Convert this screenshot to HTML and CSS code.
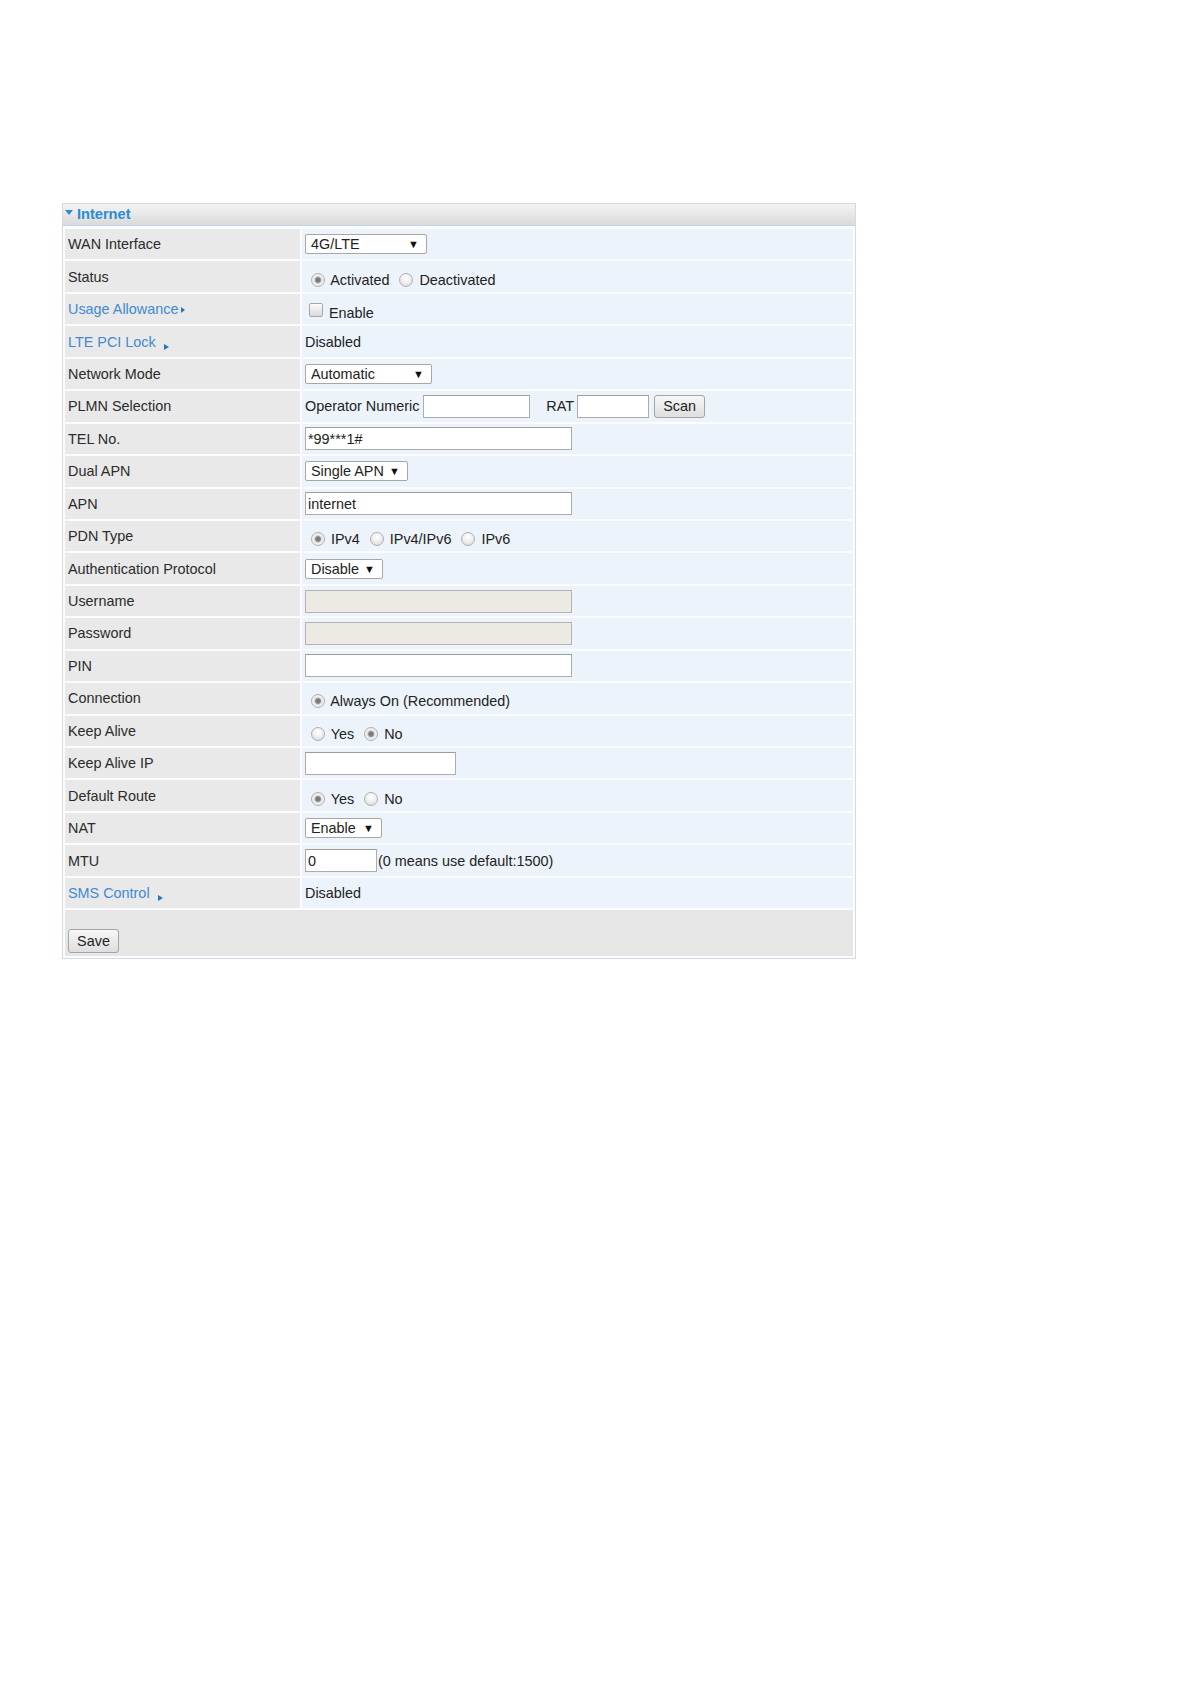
FILE: index.html
```html
<!DOCTYPE html>
<html>
<head>
<meta charset="utf-8">
<title>Internet</title>
<link rel="stylesheet" href="styles.css">
</head>
<body>
<div class="panel">
  <div class="panel-head"><span class="caret"></span>Internet</div>
  <table class="form">
    <tr><td class="lbl">WAN Interface</td><td class="val"><span class="sel"><select class="w122"><option>4G/LTE</option></select></span></td></tr>
    <tr><td class="lbl">Status</td><td class="val opt"><label><input type="radio" name="st" checked> Activated</label> <label><input type="radio" name="st"> Deactivated</label></td></tr>
    <tr><td class="lbl"><a class="link" href="#">Usage Allowance</a><span class="tri tri-mid"></span></td><td class="val opt"><label><input type="checkbox"> Enable</label></td></tr>
    <tr><td class="lbl"><a class="link" href="#">LTE PCI Lock</a> <span class="tri tri-low"></span></td><td class="val">Disabled</td></tr>
    <tr><td class="lbl">Network Mode</td><td class="val"><span class="sel"><select class="w127"><option>Automatic</option></select></span></td></tr>
    <tr><td class="lbl">PLMN Selection</td><td class="val"><span class="line"><span>Operator Numeric</span><input type="text" class="w107 gap4"><span class="gap16">RAT</span><input type="text" class="w72 gap3"><button class="btn btn-scan gap5">Scan</button></span></td></tr>
    <tr><td class="lbl">TEL No.</td><td class="val"><input type="text" class="w267" value="*99***1#"></td></tr>
    <tr><td class="lbl">Dual APN</td><td class="val"><span class="sel"><select class="w103"><option>Single APN</option></select></span></td></tr>
    <tr><td class="lbl">APN</td><td class="val"><input type="text" class="w267" value="internet"></td></tr>
    <tr><td class="lbl">PDN Type</td><td class="val opt"><label><input type="radio" name="pdn" checked> IPv4</label> <label><input type="radio" name="pdn"> IPv4/IPv6</label> <label><input type="radio" name="pdn"> IPv6</label></td></tr>
    <tr><td class="lbl">Authentication Protocol</td><td class="val"><span class="sel"><select class="w78"><option>Disable</option></select></span></td></tr>
    <tr><td class="lbl">Username</td><td class="val"><input type="text" class="w267" disabled></td></tr>
    <tr><td class="lbl">Password</td><td class="val"><input type="password" class="w267" disabled></td></tr>
    <tr><td class="lbl">PIN</td><td class="val"><input type="text" class="w267"></td></tr>
    <tr><td class="lbl">Connection</td><td class="val opt"><label><input type="radio" name="conn" checked> Always On (Recommended)</label></td></tr>
    <tr><td class="lbl">Keep Alive</td><td class="val opt"><label><input type="radio" name="ka"> Yes</label> <label><input type="radio" name="ka" checked> No</label></td></tr>
    <tr><td class="lbl">Keep Alive IP</td><td class="val"><input type="text" class="w151"></td></tr>
    <tr><td class="lbl">Default Route</td><td class="val opt"><label><input type="radio" name="dr" checked> Yes</label> <label><input type="radio" name="dr"> No</label></td></tr>
    <tr><td class="lbl">NAT</td><td class="val"><span class="sel"><select class="w77"><option>Enable</option></select></span></td></tr>
    <tr><td class="lbl">MTU</td><td class="val"><span class="line"><input type="text" class="w72" value="0"><span class="gap1">(0 means use default:1500)</span></span></td></tr>
    <tr><td class="lbl"><a class="link" href="#">SMS Control</a> <span class="tri tri-low"></span></td><td class="val">Disabled</td></tr>
    <tr class="act-row"><td class="actions" colspan="2"><button class="btn btn-save">Save</button></td></tr>
  </table>
</div>
</body>
</html>
```

FILE: styles.css
```css
html, body {
  margin: 0;
  padding: 0;
  background: #ffffff;
}

body {
  font-family: "Liberation Sans", Arial, sans-serif;
  font-size: 14.4px;
  color: #2b2b2b;
}

.panel {
  box-sizing: border-box;
  width: 794px;
  margin: 203px 0 0 62px;
  border: 1px solid #d3dae3;
  background: #fafcfe;
}

.panel-head {
  height: 21px;
  line-height: 20px;
  padding-left: 2px;
  background: linear-gradient(#f4f4f4, #dadada);
  border-bottom: 1px solid #c3d2e4;
  color: #2a8cd2;
  font-weight: bold;
  font-size: 14.6px;
}

.caret {
  display: inline-block;
  width: 0;
  height: 0;
  border-left: 4px solid transparent;
  border-right: 4px solid transparent;
  border-top: 5px solid #2a8cd2;
  margin-right: 4px;
  vertical-align: 4px;
}

.form {
  width: 100%;
  margin-top: 1px;
  border-spacing: 2px;
  border-collapse: separate;
}

.form tr {
  height: 30.45px;
}

.form td {
  padding: 0 3px;
  vertical-align: middle;
  white-space: nowrap;
}

.lbl {
  width: 229px;
  background: #e9e9e9;
  color: #2b2b2b;
}

.val {
  background: #edf3fb;
  color: #222;
}

.val.opt {
  padding-top: 6px;
}

.link {
  color: #4289cf;
  text-decoration: none;
}

.tri {
  display: inline-block;
  width: 0;
  height: 0;
  border-top: 3px solid transparent;
  border-bottom: 3px solid transparent;
  border-left: 4px solid #2677ba;
}

.tri-mid {
  margin-left: 3px;
  vertical-align: 1px;
}

.tri-low {
  margin-left: 4px;
  border-left-width: 5px;
  vertical-align: -3px;
}

.line {
  display: inline-flex;
  align-items: center;
  vertical-align: middle;
}

label {
  color: #222;
}

input[type="radio"] {
  appearance: none;
  -webkit-appearance: none;
  box-sizing: border-box;
  width: 14px;
  height: 14px;
  margin: 0 2px 0 6px;
  border: 1px solid #b0b0b0;
  border-radius: 50%;
  background: radial-gradient(circle at 50% 35%, #ffffff 0, #f0f0f0 45%, #d2d2d2 100%);
  vertical-align: -2px;
}

input[type="radio"]:checked {
  background: radial-gradient(circle, #707070 0, #858585 2.4px, #d6d6d6 3.4px, #f3f3f3 4.8px, #d6d6d6 100%);
}

input[type="checkbox"] {
  appearance: none;
  -webkit-appearance: none;
  box-sizing: border-box;
  width: 14px;
  height: 14px;
  margin: 0 2px 0 4px;
  border: 1px solid #a8a8a8;
  border-radius: 2px;
  background: linear-gradient(#fdfdfd, #d9d9d9);
  vertical-align: 1px;
}

.sel {
  position: relative;
  display: inline-block;
  vertical-align: middle;
}

.sel::after {
  content: "\25BC";
  position: absolute;
  right: 8px;
  top: 4px;
  font-size: 11px;
  line-height: 12px;
  color: #111;
  pointer-events: none;
}

select {
  appearance: none;
  -webkit-appearance: none;
  box-sizing: border-box;
  height: 20px;
  margin: 0;
  padding: 0 0 0 5px;
  border: 1px solid #a7a7a7;
  border-radius: 2px;
  background: #ffffff;
  font-family: "Liberation Sans", Arial, sans-serif;
  font-size: 14.4px;
  color: #222;
  display: block;
}

input[type="text"], input[type="password"] {
  box-sizing: border-box;
  height: 23px;
  margin: 0;
  padding: 0 2px;
  border: 1px solid #acacac;
  border-top-color: #9d9d9d;
  background: #ffffff;
  font-family: "Liberation Sans", Arial, sans-serif;
  font-size: 14.4px;
  color: #222;
  vertical-align: middle;
}

input:disabled {
  background: #ebebe4;
  border-color: #b3b3b3;
}

.w72 { width: 72px; }
.w77 { width: 77px; }
.w78 { width: 78px; }
.w103 { width: 103px; }
.w107 { width: 107px; }
.w122 { width: 122px; }
.w127 { width: 127px; }
.w151 { width: 151px; }
.w267 { width: 267px; }

.btn {
  box-sizing: border-box;
  width: 51px;
  margin: 0;
  padding: 0;
  border: 1px solid #a4a4a4;
  border-radius: 3px;
  background: linear-gradient(#f7f7f7, #dedede);
  font-family: "Liberation Sans", Arial, sans-serif;
  font-size: 14.4px;
  color: #222;
  vertical-align: middle;
}

.line .gap1 { margin-left: 1px; }
.line .gap3 { margin-left: 3px; }
.line .gap4 { margin-left: 4px; }
.line .gap5 { margin-left: 5px; }
.line .gap16 { margin-left: 16px; }

.btn-scan {
  height: 23px;
}

.btn-save {
  height: 24px;
  display: block;
}

.act-row {
  height: auto;
}

.form td.actions {
  background: #e6e6e6;
  padding: 19px 3px 3px 3px;
  vertical-align: bottom;
}
```
